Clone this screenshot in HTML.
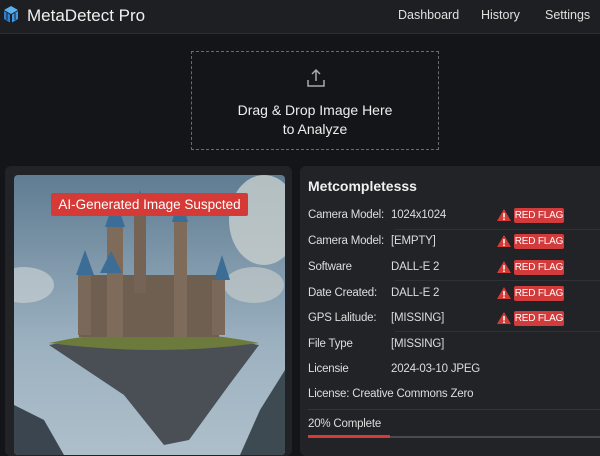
<!DOCTYPE html>
<html><head><style>
*{margin:0;padding:0;box-sizing:border-box}
body{width:600px;height:449px;overflow:hidden;background:#141518;font-family:"Liberation Sans",sans-serif;color:#e6e6e6;position:relative}
.nav{position:absolute;left:0;top:0;width:600px;height:34px;background:#1e1f22;border-bottom:1px solid #2c2d31}
.nav .t{position:absolute;left:27px;top:6px;font-size:17px;color:#f0f0f0}
.nav a{position:absolute;top:8px;font-size:12.5px;color:#e0e0e0}
.drop{position:absolute;left:191px;top:51px;width:248px;height:99px;border:1px dashed #6a6b70;text-align:center;font-size:14px;color:#eee;line-height:19px}
.panel{position:absolute;top:166px;background:#222327;border-radius:6px}
.row{position:absolute;left:8px;font-size:11.5px;letter-spacing:-0.2px;color:#ddd}
.val{position:absolute;left:91px;font-size:11.5px;letter-spacing:-0.2px;color:#ddd}
.sep{position:absolute;left:95px;right:0;height:1px;background:#303136}
.flag{position:absolute;left:196px;width:16px;height:14px}
.badge{position:absolute;left:214px;width:50px;height:15px;background:#d13b3b;border-radius:2px;font-size:10px;letter-spacing:-0.2px;color:#fff;text-align:center;line-height:15px}
</style></head><body>
<div class="nav">
<svg style="position:absolute;left:2px;top:5px" width="18" height="20" viewBox="0 0 18 20"><path d="M9 1l7 4-7 4-7-4z" fill="#5ab3f0"/><path d="M2 6l6 3.5v8L2 14z" fill="#2f7fd0"/><path d="M16 6l-6 3.5v8l6-3.5z" fill="#3d9be6"/><path d="M5 8v7M13 8v7" stroke="#1e1f22" stroke-width="1"/></svg>
<div class="t">MetaDetect Pro</div>
<a style="left:398px">Dashboard</a><a style="left:481px">History</a><a style="left:545px">Settings</a>
</div>
<div class="drop">
<svg style="position:absolute;left:114px;top:16px" width="20" height="20" viewBox="0 0 20 20" fill="none" stroke="#aaa" stroke-width="1.5"><path d="M10 13V2M6 6l4-4 4 4M2 12v6h16v-6"/></svg>
<div style="position:absolute;left:0;right:0;top:49px">Drag &amp; Drop Image Here<br>to Analyze</div>
</div>
<div class="panel" style="left:5px;width:287px;height:290px">
<svg style="position:absolute;left:9px;top:9px;border-radius:4px" width="271" height="280" viewBox="0 0 271 280">
<defs><linearGradient id="s" x1="0" y1="0" x2="0" y2="1"><stop offset="0" stop-color="#5f7c92"/><stop offset="0.6" stop-color="#9cb1c0"/><stop offset="1" stop-color="#aebfca"/></linearGradient></defs>
<rect width="271" height="280" fill="url(#s)"/>
<ellipse cx="250" cy="45" rx="35" ry="45" fill="#c9cfce" opacity="0.8"/><ellipse cx="240" cy="110" rx="30" ry="18" fill="#c5cacb" opacity="0.7"/><ellipse cx="10" cy="110" rx="30" ry="18" fill="#c8cfd2" opacity="0.7"/>
<path d="M0 230l30 15 20 35H0z" fill="#3a4550"/><path d="M271 195l-25 40-20 45h45z" fill="#3e4a52"/>
<path d="M35 170q100-20 210 0l-30 40-40 55-25 5-40-50z" fill="#4a4f55"/>
<path d="M35 168q100-22 210 0q-100 14-210 0z" fill="#6c7a3c"/>
<rect x="65" y="100" width="140" height="62" fill="#6e5f50"/>
<rect x="93" y="50" width="16" height="112" fill="#7e6b5a"/><rect x="160" y="45" width="13" height="117" fill="#7e6b5a"/><rect x="120" y="38" width="12" height="80" fill="#756455"/>
<path d="M91 52l10-30 10 30zM158 47l8-28 8 28zM118 40l8-25 8 25zM62 100l9-25 9 25zM200 105l8-25 8 25zM86 98l11-22 11 22z" fill="#3b6d96"/>
<rect x="64" y="100" width="13" height="60" fill="#7a6858"/><rect x="198" y="105" width="13" height="55" fill="#7a6858"/>
</svg>
<div style="position:absolute;left:46px;top:27px;width:197px;height:23px;background:#d63a36;border-radius:2px;color:#fff;font-size:13.5px;text-align:center;line-height:23px">AI-Generated Image Suspcted</div>
</div>
<div class="panel" style="left:300px;width:305px;height:290px">
<div style="position:absolute;left:8px;top:12px;font-size:14px;font-weight:bold;color:#f0f0f0">Metcompletesss</div>
<div class="row" style="top:43px">Camera Model:</div><div class="val" style="top:43px">1024x1024</div>
<div class="sep" style="top:63px"></div>
<div class="row" style="top:69px">Camera Model:</div><div class="val" style="top:69px">[EMPTY]</div>
<div class="row" style="top:95px">Software</div><div class="val" style="top:95px">DALL-E 2</div>
<div class="sep" style="top:114px"></div>
<div class="row" style="top:121px">Date Created:</div><div class="val" style="top:121px">DALL-E 2</div>
<div class="row" style="top:146px">GPS Lalitude:</div><div class="val" style="top:146px">[MISSING]</div>
<div class="sep" style="top:165px"></div>
<div class="row" style="top:172px">File Type</div><div class="val" style="top:172px">[MISSING]</div>
<div class="row" style="top:197px">Licensie</div><div class="val" style="top:197px">2024-03-10 JPEG</div>
<div class="row" style="top:222px">License: Creative Commons Zero</div>
<div style="position:absolute;left:8px;right:0;top:243px;height:1px;background:#34353a"></div>
<div class="row" style="top:252px">20% Complete</div>
<div style="position:absolute;left:8px;right:0;top:270px;height:2px;background:#4a4b50"></div>
<div style="position:absolute;left:8px;width:82px;top:269px;height:3px;background:#d63a36"></div>
<svg width="0" height="0" style="position:absolute"><defs><g id="w"><path d="M8 1L15 13H1z" fill="#d63a36"/><rect x="7.2" y="5" width="1.6" height="4.5" fill="#fff"/><rect x="7.2" y="10.5" width="1.6" height="1.6" fill="#fff"/></g></defs></svg>
<svg class="flag" style="top:42px"><use href="#w"/></svg><div class="badge" style="top:42px">RED FLAG</div>
<svg class="flag" style="top:68px"><use href="#w"/></svg><div class="badge" style="top:68px">RED FLAG</div>
<svg class="flag" style="top:94px"><use href="#w"/></svg><div class="badge" style="top:94px">RED FLAG</div>
<svg class="flag" style="top:120px"><use href="#w"/></svg><div class="badge" style="top:120px">RED FLAG</div>
<svg class="flag" style="top:145px"><use href="#w"/></svg><div class="badge" style="top:145px">RED FLAG</div>
</div>
</body></html>
